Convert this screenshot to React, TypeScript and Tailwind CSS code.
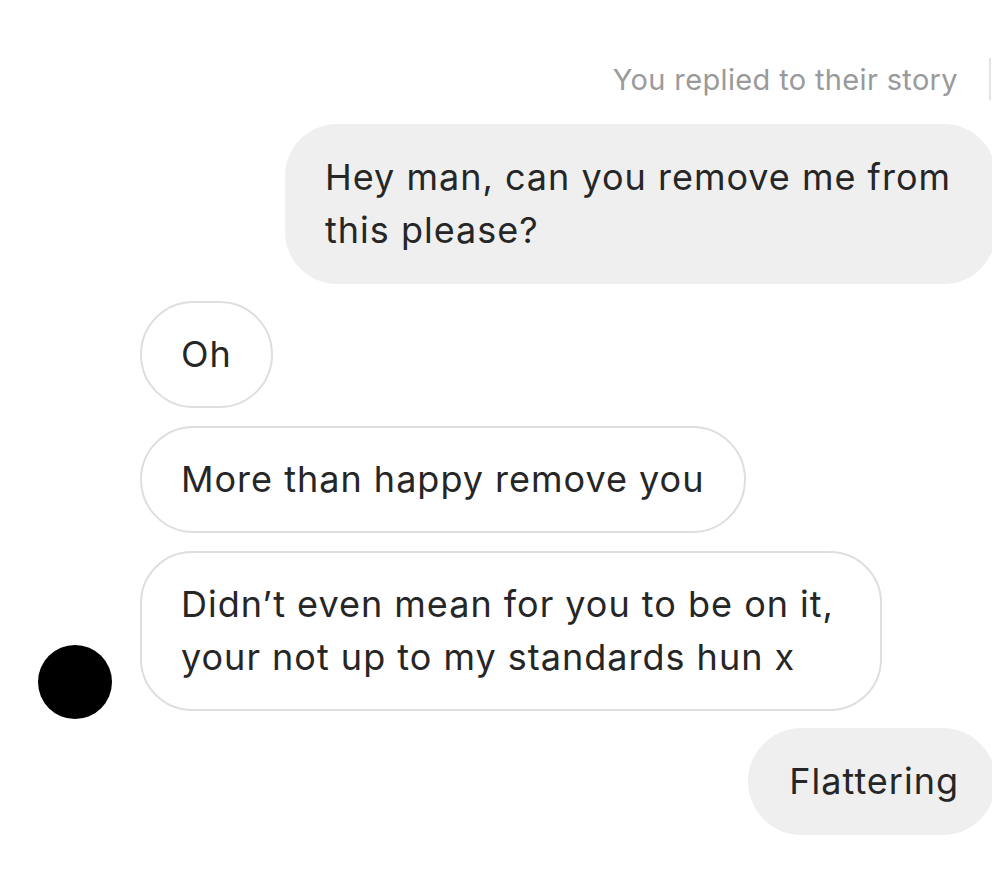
import React from "react";

const font = { fontFamily: "Inter, 'Liberation Sans', Arial, sans-serif" };

export default function App() {
  return (
    <div
      className="w-[992px] h-[896px] bg-white overflow-hidden text-[#262626]"
      style={font}
    >
      <div className="pt-[58px] flex flex-col">
        {/* header */}
        <div className="flex justify-end items-center gap-[31px] h-[42px]">
          <span className="text-[29px] tracking-[0.35px] text-[#9a9a9a] leading-none">You replied to their story</span>
          <div className="w-[2px] h-[42px] bg-[#e3e3e3] mr-[1px]" />
        </div>

        {/* sent bubble 1 */}
        <div className="flex justify-end mt-[24px] mr-[-4px]">
          <div className="bg-[#efefef] rounded-[52px] pl-[40px] pr-[40px] py-[27px] text-[36px] tracking-[1px] leading-[53px] w-[711px]">
            Hey man, can you remove me from this please?
          </div>
        </div>

        {/* received */}
        <div className="flex flex-col gap-[18px] mt-[17px]">
          <div className="pl-[140px] flex">
            <div className="border-2 border-[#dedede] rounded-full px-[39px] py-[25px] text-[36px] tracking-[1px] leading-[53px]">
              Oh
            </div>
          </div>
          <div className="pl-[140px] flex">
            <div className="border-2 border-[#dedede] rounded-full px-[39px] py-[25px] text-[36px] tracking-[1px] leading-[53px]">
              More than happy remove you
            </div>
          </div>
          <div className="flex items-end">
            <div className="w-[140px] pl-[38px] shrink-0">
              <div className="w-[74px] h-[74px] rounded-full bg-black translate-y-[8px]" />
            </div>
            <div className="border-2 border-[#dedede] rounded-[52px] pl-[39px] pr-[39px] py-[25px] text-[36px] tracking-[1px] leading-[53px] w-[742px]">
              Didn’t even mean for you to be on it, your not up to my standards hun x
            </div>
          </div>
        </div>

        {/* sent bubble 2 */}
        <div className="flex justify-end mt-[17px] mr-[-4px]">
          <div className="bg-[#efefef] rounded-full pl-[41px] pr-[37px] py-[27px] text-[36px] tracking-[1px] leading-[53px]">
            Flattering
          </div>
        </div>
      </div>
    </div>
  );
}
